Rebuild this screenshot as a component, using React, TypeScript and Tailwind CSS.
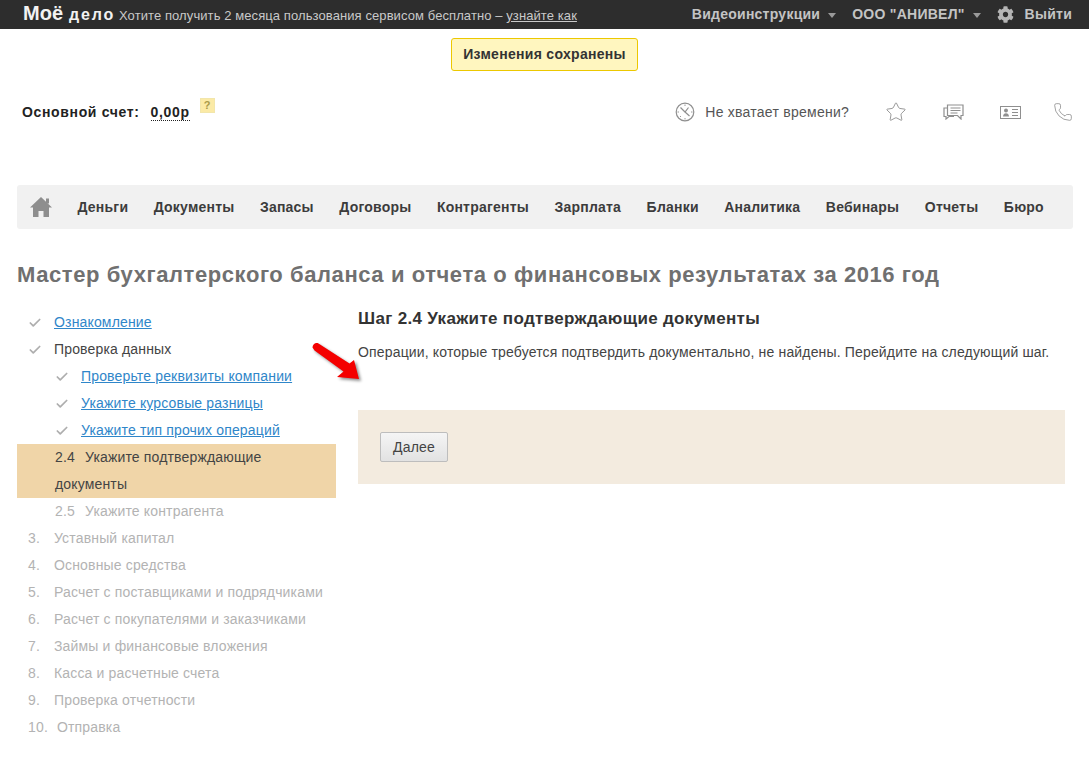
import { Check, Phone, Star } from 'lucide-react'
import { FaCog } from 'react-icons/fa'

const font = "font-['Liberation_Sans',Arial,sans-serif]"

const navItems = ['Деньги', 'Документы', 'Запасы', 'Договоры', 'Контрагенты', 'Зарплата', 'Бланки', 'Аналитика', 'Вебинары', 'Отчеты', 'Бюро']

const pendingSteps = [
  ['3.', 'Уставный капитал'],
  ['4.', 'Основные средства'],
  ['5.', 'Расчет с поставщиками и подрядчиками'],
  ['6.', 'Расчет с покупателями и заказчиками'],
  ['7.', 'Займы и финансовые вложения'],
  ['8.', 'Касса и расчетные счета'],
  ['9.', 'Проверка отчетности'],
]

function Caret() {
  return <span className="ml-[8px] mt-[2px] h-0 w-0 border-x-[4px] border-t-[5px] border-x-transparent border-t-[#9a9a9a]" />
}

function DoneMark() {
  return <Check className="h-[14px] w-[14px] shrink-0 text-[#aeaeae]" strokeWidth={3} />
}

function HomeIcon() {
  return (
    <svg width="22" height="20" viewBox="0 0 22 20" fill="#8e8e8e">
      <path d="M11 0 22 10.5h-3V20h-5.5v-6h-5v6H3v-9.5H0z" />
      <rect x="16" y="1.5" width="3" height="5" />
    </svg>
  )
}

function ClockIcon() {
  return (
    <svg width="20" height="20" viewBox="0 0 20 20" fill="none" stroke="#8f8f8f" strokeWidth="1.2">
      <circle cx="10" cy="10" r="8.8" />
      <path d="M5.5 5.5 10 10l3.5-4.5M10 10l4.5 4" />
      <path d="M10 2.5v1.5M10 16v1.5M2.5 10H4M16 10h1.5M5 15l1-1" strokeWidth="0.9" />
    </svg>
  )
}

function ChatIcon() {
  return (
    <svg width="21" height="16" viewBox="0 0 21 16" fill="none" stroke="#8f8f8f" strokeWidth="1.2">
      <path d="M4.5 1h15.5v10.5h-2v3.5l-3.5-3.5h-10z" />
      <path d="M4.5 4H1v8.5h2V15l3-2.5h5" />
      <path d="M7.5 4h10M7.5 6.5h10M7.5 9h7" strokeWidth="1" />
    </svg>
  )
}

function CardIcon() {
  return (
    <svg width="21" height="13" viewBox="0 0 21 13" fill="none" stroke="#8f8f8f" strokeWidth="1">
      <rect x="0.5" y="0.5" width="20" height="12" />
      <circle cx="6" cy="4.5" r="2" fill="#8f8f8f" stroke="none" />
      <path d="M3 10.5c0-4.500 6-4.500 6 0z" fill="#8f8f8f" stroke="none" />
      <path d="M12 3.500h6M12 6.500h6M12 9.500h6" />
    </svg>
  )
}

function RedArrow() {
  return (
    <svg
      width="54"
      height="46"
      viewBox="0 0 54 46"
      className="absolute left-[310px] top-[340px] drop-shadow-[2px_2px_1.5px_rgba(0,0,0,0.45)]"
    >
      <path
        d="M2.500 7.500C2.500 4 6 2 8.500 3.500L39.500 23.500 44 20 49 39 27 37 33.500 31.500 4.500 10.500z"
        fill="#f40000"
      />
    </svg>
  )
}

export default function App() {
  return (
    <div className={`${font} relative h-[762px] w-[1089px] overflow-hidden bg-white text-[14px] tracking-[0.16px] text-[#333]`}>
      <header className="flex h-[29px] items-center justify-between bg-[#2d2d2d] pl-[23px] pr-[17px]">
        <div className="flex items-baseline">
          <span className="text-[20px] font-bold leading-none tracking-normal text-[#f2f2f2]">Моё</span>
          <span className="ml-[6px] text-[16px] font-bold leading-none tracking-[1.8px] text-[#f2f2f2]">дело</span>
          <span className="ml-[4px] text-[13px] tracking-[0.09px] text-[#c9c9c9]">
            Хотите получить 2 месяца пользования сервисом бесплатно – <span className="underline">узнайте как</span>
          </span>
        </div>
        <div className="flex items-center text-[14px] font-bold tracking-[0.25px] text-[#c4c4c4]">
          <span>Видеоинструкции</span>
          <Caret />
          <span className="ml-[16px]">ООО "АНИВЕЛ"</span>
          <Caret />
          <FaCog className="ml-[16px] h-[17px] w-[17px] text-[#b5b5b5]" />
          <span className="ml-[11px]">Выйти</span>
        </div>
      </header>

      <div className="mt-[9px] flex justify-center">
        <div className="flex h-[33px] w-[187px] items-center justify-center rounded-[3px] border border-[#ecc800] bg-[#fff6bf] text-[14px] font-bold tracking-[0.3px] text-[#333]">
          Изменения сохранены
        </div>
      </div>

      <div className="mt-[26px] flex h-[30px] items-center justify-between pl-[22px] pr-[16px]">
        <div className="flex items-center font-bold tracking-[0.65px] text-[#222]">
          <span>Основной счет:</span>
          <span className="ml-[11px] border-b border-dotted border-[#222] leading-[16px]">0,00р</span>
          <span className="mb-[14px] ml-[10px] flex h-[15px] w-[15px] items-center justify-center border border-[#f2e6ab] bg-[#fbeaa6] text-[11px] tracking-normal text-[#a99a4a]">?</span>
        </div>
        <div className="flex items-center tracking-[0.25px] text-[#555]">
          <ClockIcon />
          <span className="ml-[10px]">Не хватает времени?</span>
          <Star className="ml-[36px] h-[22px] w-[22px] text-[#8f8f8f]" strokeWidth={1} />
          <span className="ml-[36px]"><ChatIcon /></span>
          <span className="ml-[36px]"><CardIcon /></span>
          <Phone className="ml-[32px] h-[20px] w-[20px] text-[#8f8f8f]" strokeWidth={1} />
        </div>
      </div>

      <nav className="ml-[17px] mt-[58px] flex h-[44px] w-[1056px] items-center justify-between rounded-[3px] bg-[#f1f1f1] pl-[13px] pr-[29px]">
        <HomeIcon />
        {navItems.map((item) => (
          <span key={item} className="text-[14px] font-bold tracking-[0.22px] text-[#3c3c3c]">{item}</span>
        ))}
      </nav>

      <h1 className="ml-[17px] mt-[32px] whitespace-nowrap text-[22px] font-bold leading-[28px] tracking-[0.58px] text-[#707070]">
        Мастер бухгалтерского баланса и отчета о финансовых результатах за 2016 год
      </h1>

      <div className="mt-[20px] flex">
        <aside className="ml-[17px] w-[319px] leading-[27px] text-[#444]">
          <div className="flex items-center pl-[11px]">
            <DoneMark />
            <a className="ml-[12px] text-[#2f86c9] underline">Ознакомление</a>
          </div>
          <div className="flex items-center pl-[11px]">
            <DoneMark />
            <span className="ml-[12px]">Проверка данных</span>
          </div>
          {['Проверьте реквизиты компании', 'Укажите курсовые разницы', 'Укажите тип прочих операций'].map((s) => (
            <div key={s} className="flex items-center pl-[38px]">
              <DoneMark />
              <a className="ml-[12px] text-[#2f86c9] underline">{s}</a>
            </div>
          ))}
          <div className="bg-[#f0d5a8] pl-[38px] pr-[20px]">
            <span className="mr-[10px]">2.4</span>Укажите подтверждающие документы
          </div>
          <div className="pl-[38px] text-[#b3b3b3]">
            <span className="mr-[10px]">2.5</span>Укажите контрагента
          </div>
          {pendingSteps.map(([n, s]) => (
            <div key={n} className="flex pl-[11px] text-[#b3b3b3]">
              <span className="w-[26px]">{n}</span>
              <span>{s}</span>
            </div>
          ))}
          <div className="flex pl-[11px] text-[#b3b3b3]">
            <span className="w-[29px]">10.</span>
            <span>Отправка</span>
          </div>
        </aside>

        <main className="ml-[22px] w-[707px]">
          <h2 className="-mt-[2px] text-[17px] font-bold leading-[24px] tracking-[0.33px] text-[#333]">Шаг 2.4 Укажите подтверждающие документы</h2>
          <p className="mt-[9px] whitespace-nowrap leading-[24px] text-[#444]">
            Операции, которые требуется подтвердить документально, не найдены. Перейдите на следующий шаг.
          </p>
          <div className="mt-[46px] h-[74px] bg-[#f3ebdf] px-[22px] pt-[22px]">
            <button className="h-[30px] w-[68px] rounded-[2px] border border-[#bdbdbd] bg-gradient-to-b from-[#f5f5f5] to-[#e2e2e2] text-[14px] text-[#444]">
              Далее
            </button>
          </div>
        </main>
      </div>

      <RedArrow />
    </div>
  )
}
